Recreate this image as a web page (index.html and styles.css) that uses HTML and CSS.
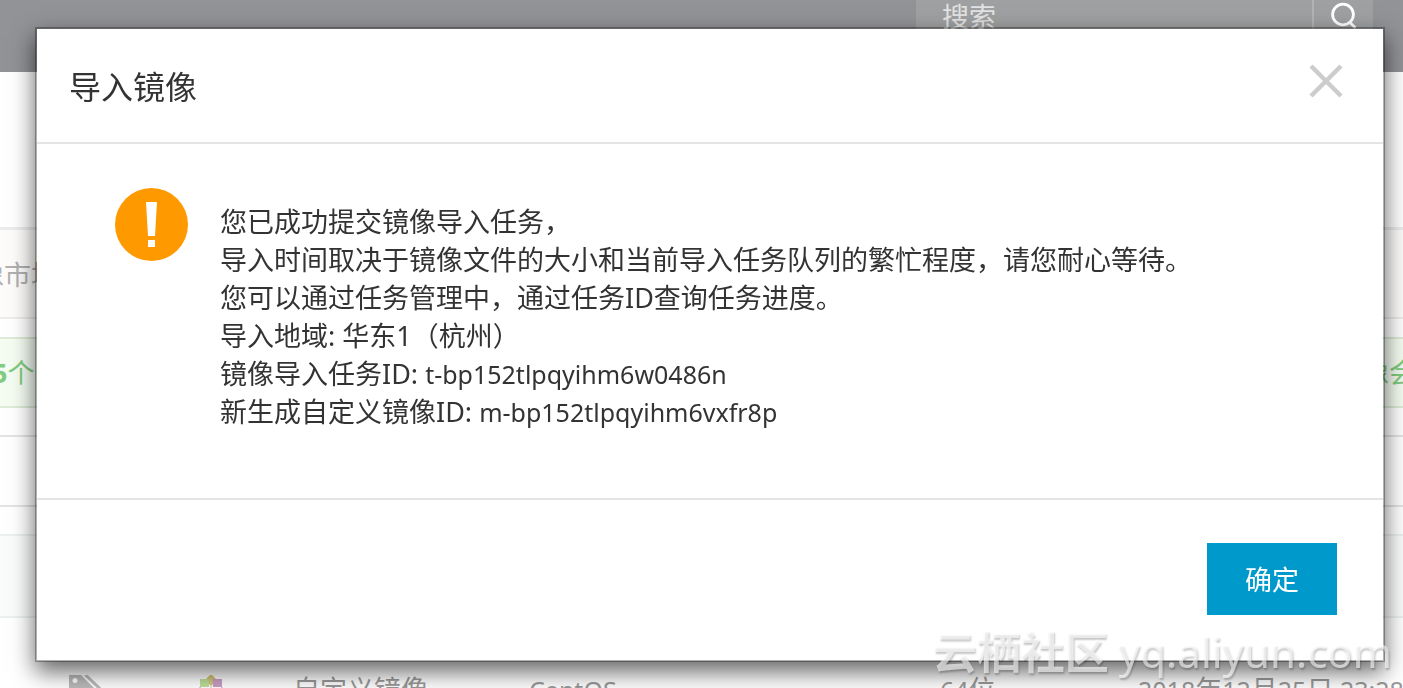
FILE: index.html
```html
<!DOCTYPE html>
<html lang="zh-CN">
<head>
<meta charset="utf-8">
<title>导入镜像</title>
<meta name="viewport" content="width=device-width, initial-scale=1">
<link rel="stylesheet" href="styles.css">
</head>
<body>
<div class="page">
  <header class="topbar">
    <form class="search">
      <input class="search-input" type="text" placeholder="搜索" aria-label="搜索">
      <button class="search-button" type="button" aria-label="搜索">
        <svg width="28" height="28" viewBox="0 0 28 28" fill="none" stroke="#fff" stroke-width="2.8"><circle cx="12" cy="12.5" r="10.4"/><path d="M18.500 20l6 6"/></svg>
      </button>
    </form>
  </header>
  <nav class="tabs"><a class="tab" href="#">镜像市场</a></nav>
  <div class="notice"><span class="notice-start"><b>5</b>个</span><span class="notice-end">像会</span></div>
  <div class="filters"></div>
  <table class="images">
    <colgroup><col class="c-tag"><col class="c-logo"><col class="c-type"><col class="c-os"><col class="c-bits"><col class="c-time"></colgroup>
    <thead><tr><td colspan="6"></td></tr></thead>
    <tbody><tr>
      <td class="tag-cell"><svg width="36" height="34" viewBox="0 0 36 34"><path d="M0 0h12l20 20-12 12L0 13z" fill="#bbb"/><circle cx="6" cy="5.5" r="2.5" fill="#fff"/><path d="M16.5 0l19 18" stroke="#bbb" stroke-width="3"/></svg></td>
      <td><svg width="32" height="36" viewBox="0 0 32 36"><path d="M16 -1l6 6-6 6-6-6z" fill="#d3c070"/><path d="M5 4h9v8H5z" fill="#bfe09a"/><path d="M18 4h9v8H18z" fill="#c9a0c6"/><path d="M0 18l5-6 6 6-6 6zM21 18l6-6 5 6-5 6z" fill="#aa8cae"/><path d="M5 20h10v10H5z" fill="#8e8ebb"/><path d="M17 20h10v10H17z" fill="#e0bd77"/><path d="M16 2v31M2 17h28" stroke="#d6d0b0"/></svg></td>
      <td>自定义镜像</td><td class="latin">CentOS</td><td class="latin">64<span class="han">位</span></td><td class="latin">2018<span class="han">年</span>12<span class="han">月</span>25<span class="han">日</span> 23:28</td>
    </tr></tbody>
  </table>
</div>

<div class="overlay">
  <section class="dialog" role="dialog" aria-modal="true" aria-labelledby="dialog-title">
    <header class="dialog-header">
      <h1 class="dialog-title" id="dialog-title">导入镜像</h1>
      <button class="close" type="button" aria-label="关闭">
        <svg width="34" height="34" viewBox="0 0 34 34" stroke="#ccc" stroke-width="4.4"><path d="M2 2l30 30M32 2L2 32"/></svg>
      </button>
    </header>
    <div class="dialog-body">
      <svg class="warning" width="73" height="73" viewBox="0 0 73 73" aria-hidden="true"><circle cx="36.5" cy="36.5" r="36.5" fill="#f90"/><path d="M31 14h11l-2 34h-7zM33 52h7v7h-7z" fill="#fff"/></svg>
      <div class="message">
        <p>您已成功提交镜像导入任务，</p>
        <p>导入时间取决于镜像文件的大小和当前导入任务队列的繁忙程度，请您耐心等待。</p>
        <p>您可以通过任务管理中，通过任务ID查询任务进度。</p>
        <p>导入地域: 华东1（杭州）</p>
        <p>镜像导入任务ID: <span class="latin">t-bp152tlpqyihm6w0486n</span></p>
        <p>新生成自定义镜像ID: <span class="latin">m-bp152tlpqyihm6vxfr8p</span></p>
      </div>
    </div>
    <footer class="dialog-footer"><button class="confirm" type="button">确定</button></footer>
  </section>
</div>
<div class="watermark"><span class="watermark-name">云栖社区</span><span>yq.aliyun.com</span></div>
</body>
</html>
```
FILE: styles.css
```css
* { box-sizing: border-box; }
body {
  margin: 0;
  height: 100vh;
  overflow: hidden;
  background: #fff;
  color: #333;
  font: 27px/38px "Noto Sans", "Noto Sans CJK SC", sans-serif;
}
p, h1 { margin: 0; }
button { padding: 0; border: 0; background: none; font: inherit; }
svg { display: block; }
.latin { font-size: 25px; }
.han { font-size: 27px; }

.page { height: 100vh; overflow: hidden; color: #999; }
.topbar {
  display: flex;
  justify-content: flex-end;
  height: 72px;
  padding-right: 30px;
  background: #929397;
}
.search { display: flex; width: 457px; height: 36px; background: #9fa0a1; }
.search-input {
  flex: 1;
  min-width: 0;
  height: 34px;
  padding: 0 26px;
  border: 0;
  background: none;
  color: #eee;
  font: inherit;
}
.search-input::placeholder { color: #e2e2e2; opacity: 1; }
.search-button {
  display: flex;
  align-items: flex-start;
  width: 61px;
  padding: 2px 0 0 17px;
  border-left: 2px solid #b2b3b4;
}

.tabs {
  display: flex;
  align-items: center;
  height: 92px;
  margin-top: 155px;
  border-top: 3px solid #ececec;
  border-bottom: 2px solid #ececec;
  background: #fdfcfb;
}
.tab { margin-left: -50px; padding-top: 2px; color: #b0b0b0; text-decoration: none; }
.notice {
  display: flex;
  align-items: center;
  justify-content: space-between;
  height: 71px;
  margin-top: 18px;
  border: solid #dcecd6;
  border-width: 2px 0;
  background: #f5fdf2;
  color: #80cc80;
}
.notice-start { margin-left: -8px; }
.notice-end { margin-right: -13px; }
.filters {
  height: 72px;
  margin-top: 27px;
  border: solid #e4e4e4;
  border-width: 2px 0;
}
.images { width: 100%; margin-top: 27px; table-layout: fixed; border-collapse: collapse; }
.images thead td { height: 82px; border: solid #edf0f1; border-width: 2px 0; background: #fafbfb; }
.images td { padding: 0; white-space: nowrap; vertical-align: top; }
.images tbody td { padding-top: 53px; }
.images tbody td:nth-child(-n+2) { padding-top: 57px; }
.images tbody .tag-cell { padding-left: 69px; }
.c-tag { width: 195px; }
.c-logo { width: 98px; }
.c-type { width: 236px; }
.c-os { width: 411px; }
.c-bits { width: 198px; }

.overlay { position: fixed; inset: 0; padding: 27px 18px 26px 35px; }
.dialog {
  border: 2px solid rgba(0, 0, 0, 0.3);
  background: #fff;
  background-clip: padding-box;
  box-shadow: 0 10px 22px rgba(0, 0, 0, 0.6);
}
.dialog-header {
  display: flex;
  align-items: center;
  justify-content: space-between;
  height: 115px;
  padding: 0 40px 0 32px;
  border-bottom: 2px solid #e4e4e4;
}
.dialog-title { padding-top: 2px; font-size: 32px; font-weight: 400; line-height: 48px; }
.close { margin-bottom: 10px; }
.dialog-body { display: flex; gap: 32px; padding: 44px 78px 67px; }
.warning { flex: none; }
.message { padding-top: 15px; }
.dialog-footer {
  display: flex;
  justify-content: flex-end;
  padding: 43px 46px 45px;
  border-top: 2px solid #e4e4e4;
}
.confirm { width: 130px; height: 72px; padding-top: 2px; background: #09c; color: #fff; }

.watermark {
  position: fixed;
  right: 11px;
  bottom: 10px;
  display: flex;
  gap: 10px;
  align-items: center;
  color: rgba(255, 255, 255, 0.6);
  font: 42px/52px "Noto Sans", "Noto Sans CJK SC", sans-serif;
  text-shadow: 1px 2px 2px rgba(0, 0, 0, 0.22);
}
.watermark-name { font-size: 44px; font-weight: 700; }
```
